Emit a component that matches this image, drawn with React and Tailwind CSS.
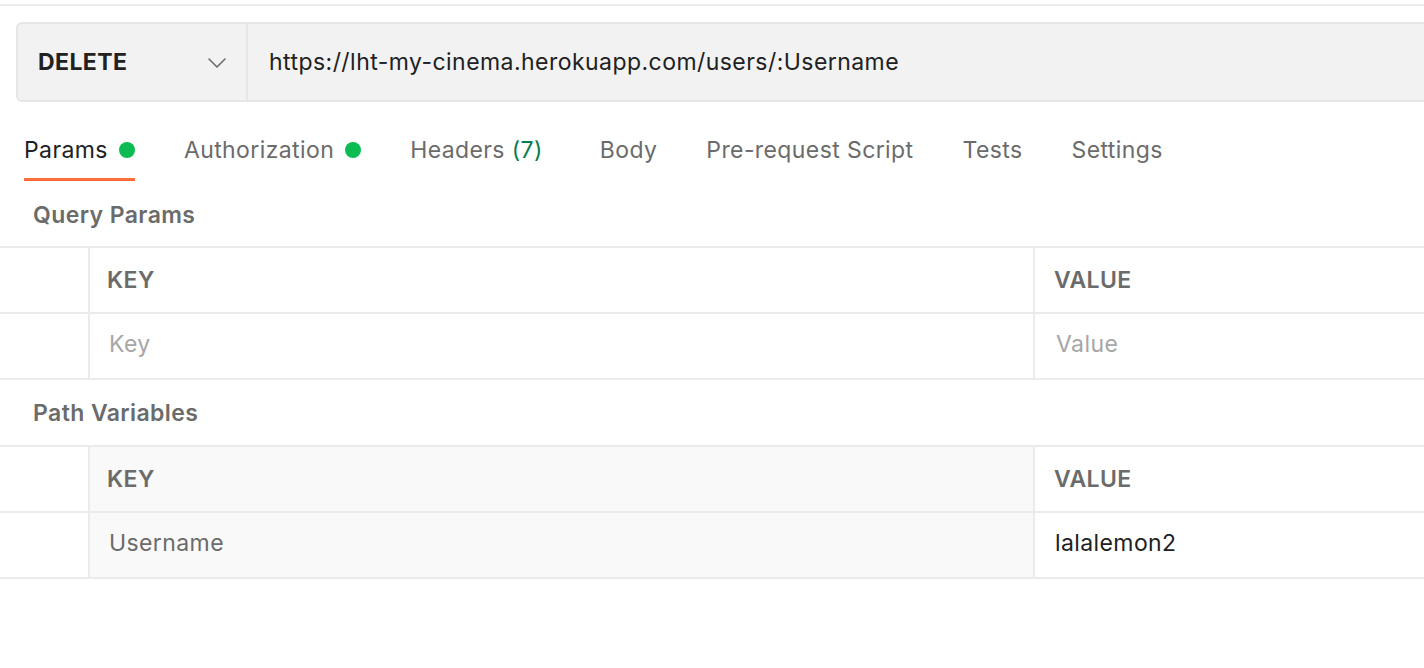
import React from 'react';

const tabs = [
  { label: 'Params', dot: true, active: true },
  { label: 'Authorization', dot: true },
  { label: 'Headers', count: '(7)', extra: true },
  { label: 'Body' },
  { label: 'Pre-request Script' },
  { label: 'Tests' },
  { label: 'Settings' },
];

function Tab({ tab }) {
  return (
    <div
      className={`flex items-center gap-[11px] pt-[33px] pb-[13px] border-b-[3px] ${
        tab.active ? 'border-[#ff6c37] text-[#212121]' : 'border-transparent text-[#6b6b6b]'
      } ${tab.extra ? 'pr-[8px]' : ''}`}
    >
      <span className="leading-[30px]">
        {tab.label}
        {tab.count && <span className="text-[#0a7d4f]"> {tab.count}</span>}
      </span>
      {tab.dot && <span className="w-[16px] h-[16px] rounded-full bg-[#0cbb52]" />}
    </div>
  );
}

function Table({ keyText, valueText, keyPlaceholder, valuePlaceholder, readOnlyKey }) {
  const keyBg = readOnlyKey ? 'bg-[#f9f9f9]' : 'bg-white';
  return (
    <div className="border-t-2 border-[#ebebeb]">
      {/* header */}
      <div className="flex h-[66px] border-b-2 border-[#ebebeb]">
        <div className="w-[90px] border-r-2 border-[#ebebeb]" />
        <div className={`w-[945px] border-r-2 border-[#ebebeb] flex items-center pl-[17px] font-semibold text-[#6b6b6b] ${keyBg}`}>
          KEY
        </div>
        <div className="flex-1 flex items-center pl-[19px] font-semibold text-[#6b6b6b]">VALUE</div>
      </div>
      {/* row */}
      <div className="flex h-[66px] border-b-2 border-[#ebebeb]">
        <div className="w-[90px] border-r-2 border-[#ebebeb]" />
        <div className={`w-[945px] border-r-2 border-[#ebebeb] flex items-center pl-[19px] pb-[3px] ${keyBg}`}>
          {keyText ? (
            <span className="text-[#6b6b6b]">{keyText}</span>
          ) : (
            <span className="text-[#a6a6a6]">{keyPlaceholder}</span>
          )}
        </div>
        <div className="flex-1 flex items-center pl-[20px] pb-[3px]">
          {valueText ? (
            <span className="text-[#212121]">{valueText}</span>
          ) : (
            <span className="text-[#a6a6a6] pl-[1px]">{valuePlaceholder}</span>
          )}
        </div>
      </div>
    </div>
  );
}

export default function App() {
  return (
    <div
      className="w-[1424px] h-[668px] bg-white overflow-hidden text-[23px] tracking-[0.4px]"
      style={{ fontFamily: 'Inter, "Noto Sans", sans-serif' }}
    >
      <div className="h-[4px]" />
      <div className="h-[2px] bg-[#ebebeb]" />

      {/* request bar */}
      <div className="pl-[16px] pt-[16px]">
        <div className="flex h-[80px] w-[1440px] bg-[#f2f2f2] border-2 border-[#e6e6e6] rounded-[6px]">
          <div className="w-[230px] border-r-2 border-[#e6e6e6] flex items-center justify-between pl-[20px] pr-[20px]">
            <span className="font-bold text-[#212121]">DELETE</span>
            <svg width="18" height="10" viewBox="0 0 18 10" fill="none" className="mt-[2px]">
              <path d="M1 1 L9 9 L17 1" stroke="#6b6b6b" strokeWidth="1.6" strokeLinecap="round" strokeLinejoin="round" />
            </svg>
          </div>
          <div className="flex items-center pl-[21px] text-[#212121] tracking-[0.45px]">
            https://lht-my-cinema.herokuapp.com/users/:Username
          </div>
        </div>
      </div>

      {/* tabs */}
      <div className="flex pl-[24px] gap-[49px]">
        {tabs.map((t) => (
          <Tab key={t.label} tab={t} />
        ))}
      </div>

      <div className="mt-[19px] mb-[16px] pl-[33px] leading-[30px] font-semibold text-[#6b6b6b]">Query Params</div>
      <Table keyPlaceholder="Key" valuePlaceholder="Value" />

      <div className="mt-[18px] mb-[17px] pl-[33px] leading-[30px] font-semibold text-[#6b6b6b]">Path Variables</div>
      <Table keyText="Username" valueText="lalalemon2" readOnlyKey />
    </div>
  );
}
